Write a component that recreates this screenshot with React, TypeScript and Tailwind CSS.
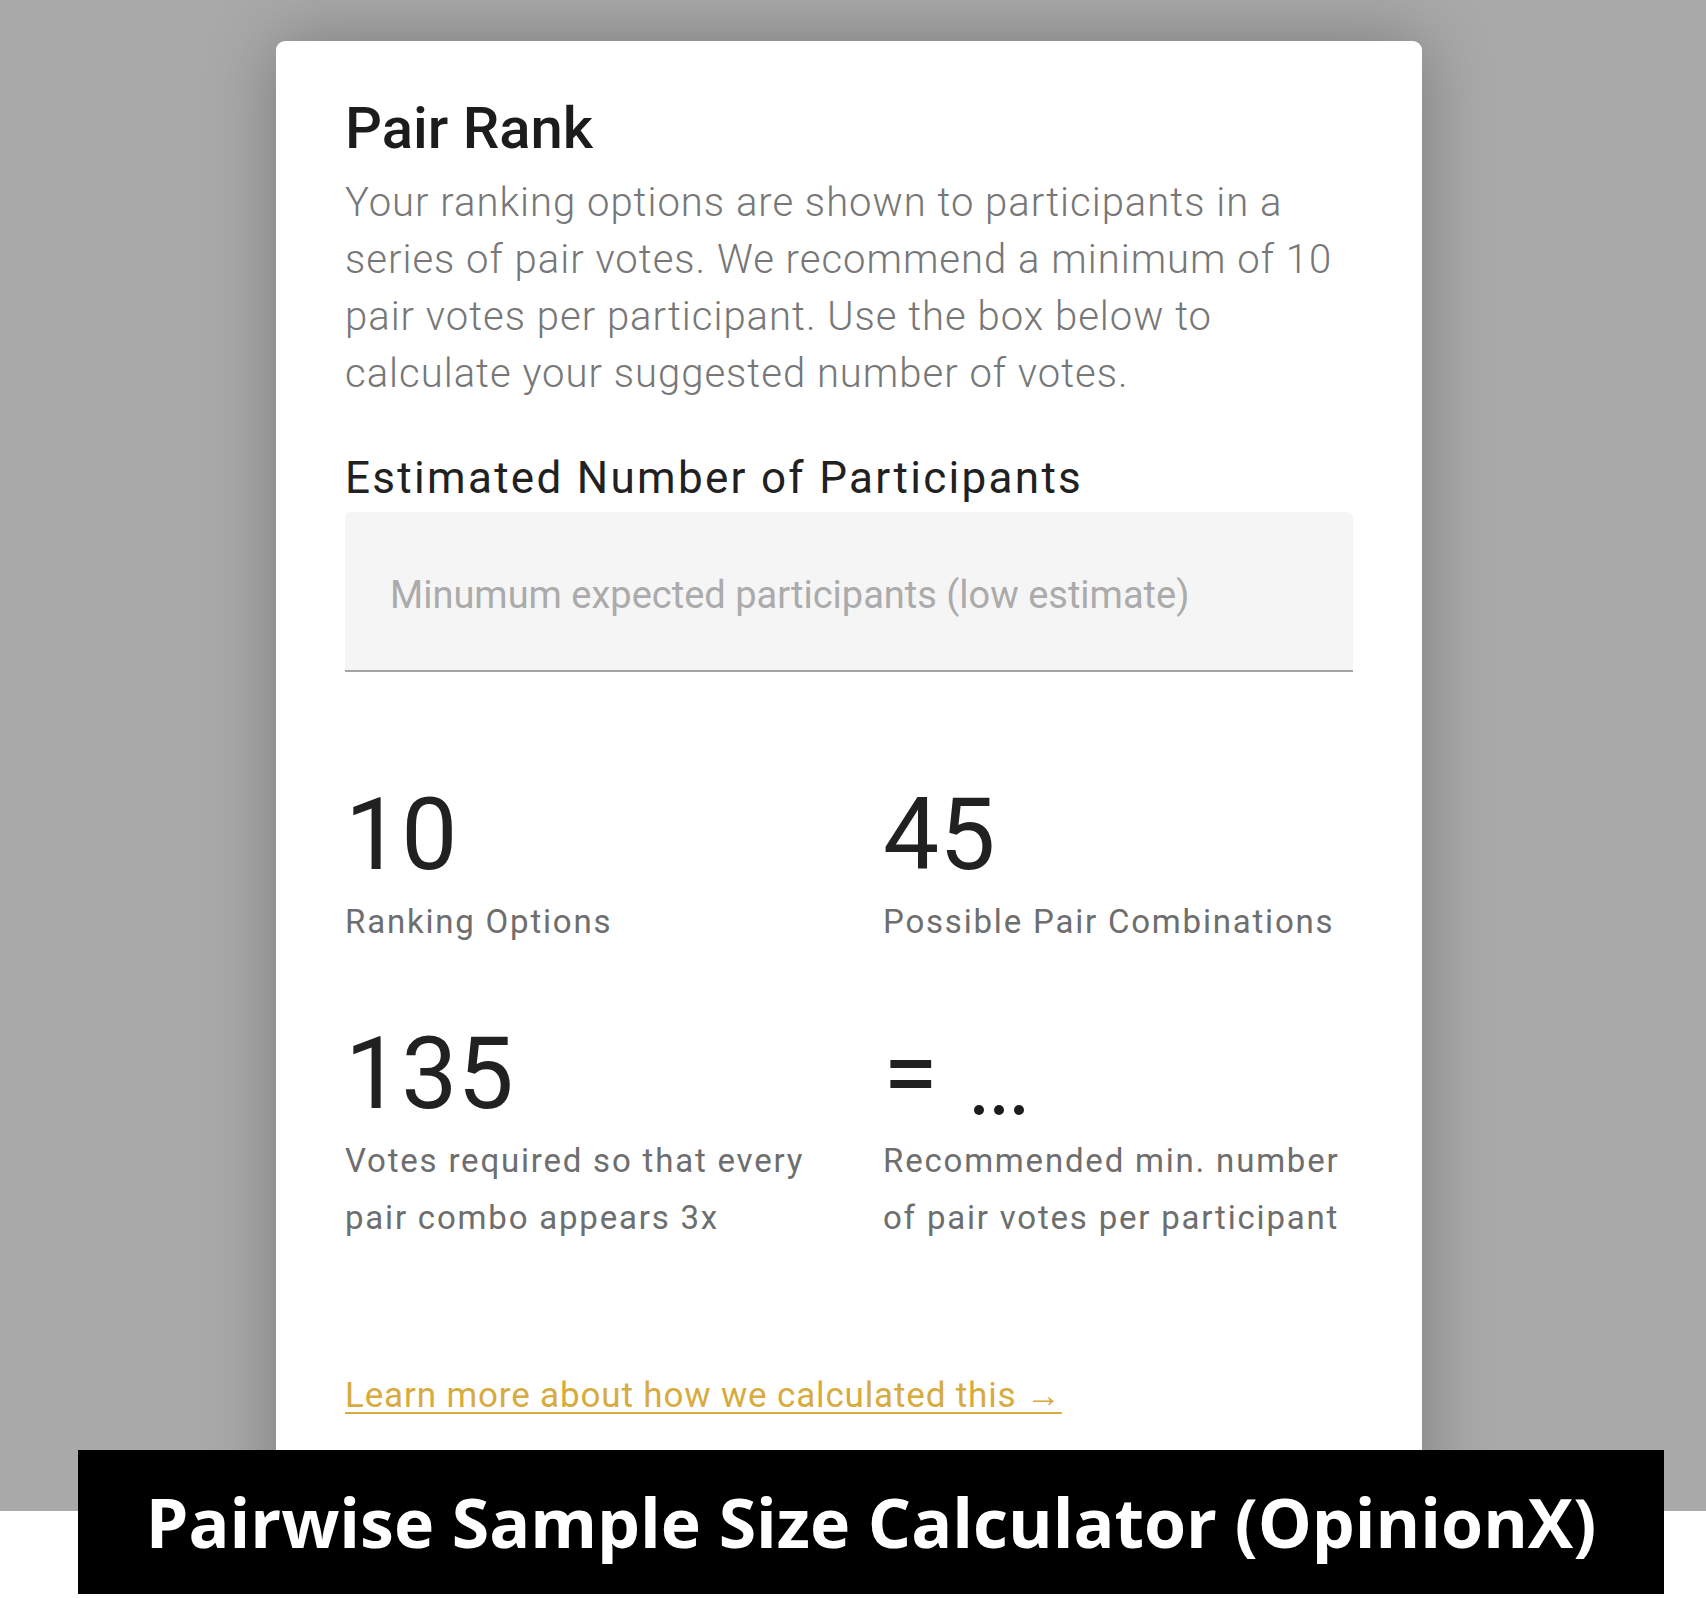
const stats = [
  { value: '10', label: ['Ranking Options'] },
  { value: '45', label: ['Possible Pair Combinations'] },
  { value: '135', label: ['Votes required so that every', 'pair combo appears 3x'] },
];

const Stat = ({ value, label }: { value: string; label: string[] }) => (
  <div className="flex flex-col">
    <div className="text-[100px] leading-[100px] text-[#212121]">{value}</div>
    <div className="mt-[8px] text-[33px] leading-[57px] tracking-[1.8px] text-[#6e6e6e]">
      {label.map(l => (
        <div key={l}>{l}</div>
      ))}
    </div>
  </div>
);

export default function App() {
  return (
    <div className="relative w-[1706px] h-[1598px] bg-white overflow-hidden" style={{ fontFamily: 'Roboto, "Liberation Sans", sans-serif' }}>
      <div className="h-[1511px] bg-[#a9a9a9] pt-[41px] pl-[276px] overflow-hidden">
        <div className="w-[1146px] h-[1500px] bg-white rounded-[9px] px-[69px] pt-[53px] shadow-[0_0_70px_rgba(0,0,0,0.28)]">
          <h1 className="text-[58px] leading-[68px] font-medium text-[#1c1c1c]">Pair Rank</h1>
          <p className="mt-[12px] text-[40px] leading-[57px] font-light tracking-[1px] text-[#777777]">
            Your ranking options are shown to participants in a series of pair votes. We recommend a minimum of 10 pair votes per participant. Use the box below to calculate your suggested number of votes.
          </p>

          <label className="block mt-[50px] text-[44px] leading-[52px] tracking-[2.3px] text-[#212121]">
            Estimated Number of Participants
          </label>
          <div className="mt-[8px] h-[160px] bg-[#f5f5f5] rounded-t-[6px] border-b-2 border-[#a3a3a3] flex">
            <input
              className="w-full h-full bg-transparent pl-[45px] pt-[8px] text-[38px] text-[#212121] outline-none placeholder:text-[#ababab]"
              placeholder="Minumum expected participants (low estimate)"
            />
          </div>

          <div className="mt-[113px] grid grid-cols-2 gap-x-[68px] gap-y-[74px]">
            {stats.map(s => (
              <Stat key={s.value} value={s.value} label={s.label} />
            ))}
            <div className="flex flex-col">
              <div className="h-[100px] flex items-start text-[#212121]">
                <span className="text-[100px] leading-[100px]">=</span>
                <span className="ml-[36px] mt-[81px] flex gap-[10px]">
                  <span className="w-[10px] h-[10px] rounded-full bg-[#1c1c1c]" />
                  <span className="w-[10px] h-[10px] rounded-full bg-[#1c1c1c]" />
                  <span className="w-[10px] h-[10px] rounded-full bg-[#1c1c1c]" />
                </span>
              </div>
              <div className="mt-[8px] text-[33px] leading-[57px] tracking-[1.8px] text-[#6e6e6e]">
                <div>Recommended min. number</div>
                <div>of pair votes per participant</div>
              </div>
            </div>
          </div>

          <a href="#" className="inline-block mt-[126px] text-[35px] leading-[48px] tracking-[0.85px] text-[#d7ab3e] underline decoration-2 underline-offset-[5px]">
            Learn more about how we calculated this →
          </a>
        </div>
      </div>

      <div className="absolute left-[78px] top-[1450px] w-[1586px] h-[144px] bg-black flex items-center justify-center">
        <span className="text-white text-[68px] font-bold" style={{ fontFamily: '"Open Sans", Lato, sans-serif' }}>
          Pairwise Sample Size Calculator (OpinionX)
        </span>
      </div>
    </div>
  );
}
